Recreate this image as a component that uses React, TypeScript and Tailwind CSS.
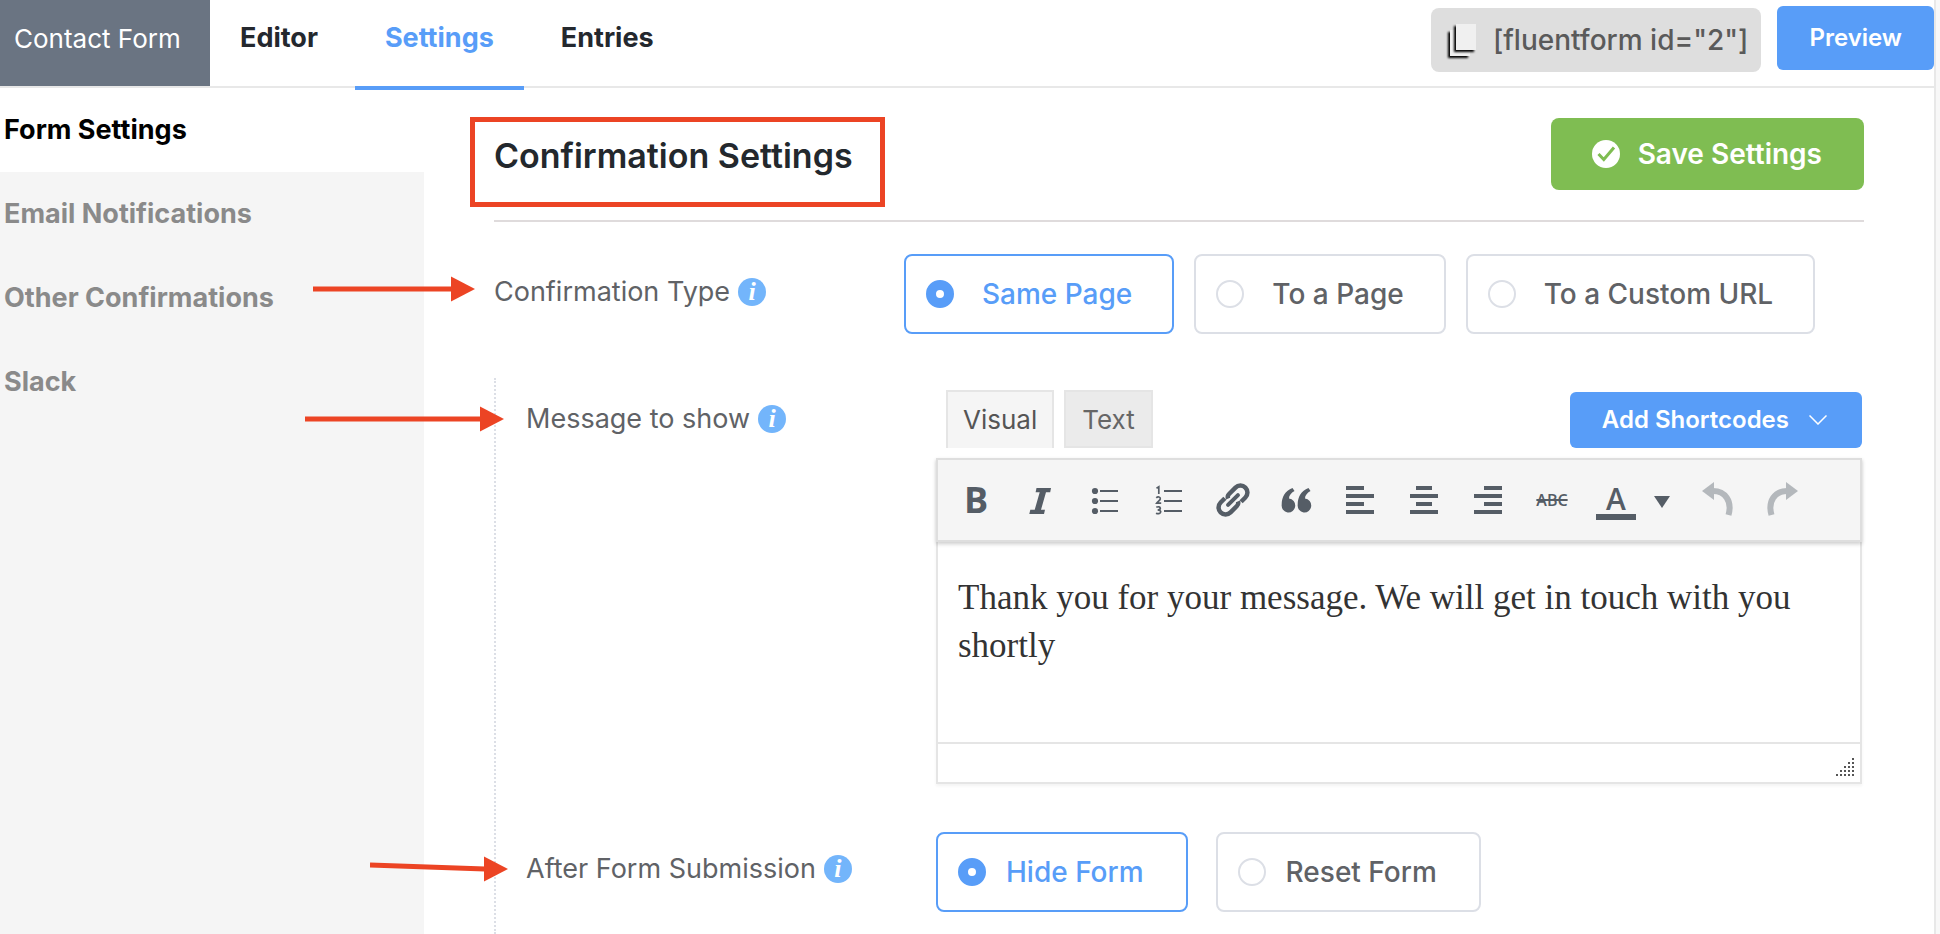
import { useState, type ReactNode } from "react";

const sans = "font-['Inter',sans-serif]";

function InfoIcon() {
  return (
    <span
      aria-hidden
      className="flex size-7 shrink-0 items-center justify-center rounded-full bg-[#73b5fb] font-['Liberation_Serif',serif] text-[26px] leading-7 font-bold text-white italic"
    >
      i
    </span>
  );
}

function FieldLabel({ children }: { children: ReactNode }) {
  return (
    <div className="flex items-center gap-2 text-[27px] leading-9 whitespace-nowrap text-[#606266]">
      {children}
      <InfoIcon />
    </div>
  );
}

function Arrow({ className, length, tilt = 0 }: { className: string; length: number; tilt?: number }) {
  const y = 13 + tilt;
  return (
    <svg
      aria-hidden
      width={length}
      height={32}
      viewBox={`0 0 ${length} 32`}
      className={`pointer-events-none absolute z-10 ${className}`}
    >
      <path d={`M0 13L${length - 23} ${y}`} stroke="#ec4424" strokeWidth="5" />
      <path d={`M${length - 24} ${y - 12.5}L${length} ${y}L${length - 24} ${y + 12.5}Z`} fill="#ec4424" />
    </svg>
  );
}

type OptionsProps = {
  name: string;
  options: string[];
  value: string;
  onChange: (v: string) => void;
  groupClass: string;
  itemClass: string;
};

function RadioCards({ name, options, value, onChange, groupClass, itemClass }: OptionsProps) {
  return (
    <div role="radiogroup" aria-label={name} className={`flex ${groupClass}`}>
      {options.map((option) => (
        <label
          key={option}
          className={`flex h-20 cursor-pointer items-center rounded-lg border-2 border-[#dcdfe6] pl-5 text-[28px] font-medium whitespace-nowrap text-[#606266] has-checked:border-[#589df8] has-checked:text-[#589df8] ${itemClass}`}
        >
          <input
            type="radio"
            name={name}
            checked={value === option}
            onChange={() => onChange(option)}
            className="size-7 shrink-0 appearance-none rounded-full border-2 border-[#dcdfe6] bg-white checked:border-[10px] checked:border-[#589df8]"
          />
          {option}
        </label>
      ))}
    </div>
  );
}

function Tool({ label, children, faded }: { label: string; children: ReactNode; faded?: boolean }) {
  return (
    <button
      type="button"
      aria-label={label}
      className={`flex h-10 w-16 shrink-0 items-center justify-center ${faded ? "text-[#b4b8bc]" : "text-[#555d66]"}`}
    >
      {children}
    </button>
  );
}

function Glyph({ children }: { children: ReactNode }) {
  return (
    <svg width="40" height="40" viewBox="0 0 40 40" fill="currentColor" aria-hidden>
      {children}
    </svg>
  );
}

function Toolbar() {
  return (
    <div className="relative flex h-[84px] items-center border-2 border-[#dedede] bg-[#f5f5f5] pl-[6px] shadow-[0_2px_4px_rgba(0,0,0,0.2)]">
      <Tool label="Bold">
        <span className="font-['Open_Sans',sans-serif] text-4xl leading-10 font-bold">B</span>
      </Tool>
      <Tool label="Italic">
        <Glyph>
          <path d="M16.500 8H31L30.200 12.200H26L21 29.800H25L24 34H9.300L10.300 29.800H14.700L19.700 12.200H15.600Z" />
        </Glyph>
      </Tool>
      <Tool label="Bulleted list">
        <Glyph>
          <circle cx="11" cy="11" r="3.100" />
          <circle cx="11" cy="21" r="3.100" />
          <circle cx="11" cy="31" r="3.100" />
          <path d="M16 10h18v2H16zM16 20h18v2H16zM16 30h18v2H16z" />
        </Glyph>
      </Tool>
      <Tool label="Numbered list">
        <Glyph>
          <g fill="none" stroke="currentColor" strokeWidth="1.700">
            <path d="M8.500 8.200L10.800 6.800V14" />
            <path d="M8.300 17.800C9.800 16.300 12.600 16.800 12.300 18.800C12.100 20.300 10 21.500 8.800 23.100H13.200" />
            <path d="M8.300 27.300C10 26.300 12.400 26.700 12.300 28.400C12.200 29.700 11 30 9.600 30C11.400 30 12.800 30.500 12.700 32C12.500 34 9.800 34 8 33.200" />
          </g>
          <path d="M16 10h18v2H16zM16 20h18v2H16zM16 30h18v2H16z" />
        </Glyph>
      </Tool>
      <Tool label="Insert link">
        <Glyph>
          <g transform="translate(1 0) rotate(-45 20 20)" fill="none" stroke="currentColor" strokeWidth="4.500">
            <path d="M17.500 15.500C18.300 13.700 19.700 13 21.500 13H30.500a7 7 0 0 1 0 14H24.500" />
            <path d="M22.500 24.500C21.700 26.300 20.300 27 18.500 27H9.500a7 7 0 0 1 0-14H15.500" />
            <path d="M13 20H27" stroke="#f5f5f5" strokeWidth="7" strokeLinecap="round" />
            <path d="M13 20H27" strokeWidth="4" strokeLinecap="round" />
          </g>
        </Glyph>
      </Tool>
      <Tool label="Blockquote">
        <Glyph>
          <path d="M16.500 8C9 11 5.700 17 5.700 24.500A6.800 7 0 1 0 13 18.500C13 15.500 15 13 18.500 11Z" />
          <path d="M32.500 8C25 11 21.700 17 21.700 24.500A6.800 7 0 1 0 29 18.500C29 15.500 31 13 34.500 11Z" />
        </Glyph>
      </Tool>
      <Tool label="Align left">
        <Glyph>
          <path d="M6 6h18v4H6zM6 14h28v4H6zM6 22h18v4H6zM6 30h28v4H6z" />
        </Glyph>
      </Tool>
      <Tool label="Align center">
        <Glyph>
          <path d="M12 6h16v4H12zM6 14h28v4H6zM12 22h16v4H12zM6 30h28v4H6z" />
        </Glyph>
      </Tool>
      <Tool label="Align right">
        <Glyph>
          <path d="M16 6h18v4H16zM6 14h28v4H6zM16 22h18v4H16zM6 30h28v4H6z" />
        </Glyph>
      </Tool>
      <Tool label="Strikethrough">
        <span className="font-['Open_Sans',sans-serif] text-base leading-10 font-semibold line-through decoration-2">
          ABC
        </span>
      </Tool>
      <Tool label="Text color">
        <span className="flex h-10 w-10 flex-col items-center border-b-6 border-current font-['Open_Sans',sans-serif] text-3xl leading-[38px] font-semibold">
          A
        </span>
      </Tool>
      <button type="button" aria-label="More text colors" className="w-[38px] shrink-0 pt-1 pl-[6px] text-[#555d66]">
        <svg width="16" height="12" viewBox="0 0 16 12" fill="currentColor" aria-hidden>
          <path d="M0 0H16L8 12Z" />
        </svg>
      </button>
      <Tool label="Undo" faded>
        <Glyph>
          <path d="M4 11L16 2V20Z" />
          <path d="M15 11C27 11 34.500 21 30.500 35" fill="none" stroke="currentColor" strokeWidth="6" />
        </Glyph>
      </Tool>
      <Tool label="Redo" faded>
        <Glyph>
          <path d="M36 11L24 2V20Z" />
          <path d="M25 11C13 11 5.500 21 9.500 35" fill="none" stroke="currentColor" strokeWidth="6" />
        </Glyph>
      </Tool>
    </div>
  );
}

function ResizeGrip() {
  const dots = [0, 1, 2, 3, 4].flatMap((row) =>
    [0, 1, 2, 3, 4].filter((col) => col >= 4 - row).map((col) => ({ row, col })),
  );
  return (
    <svg width="18" height="18" viewBox="0 0 18 18" fill="#555" aria-hidden>
      {dots.map(({ row, col }) => (
        <rect key={`${row}-${col}`} x={col * 4} y={row * 4} width="2" height="2" />
      ))}
    </svg>
  );
}

function Header() {
  return (
    <header className="relative z-10 flex h-[88px] border-b-2 border-[#e8e8e8]">
      <div className="flex w-[210px] items-center bg-[#6a7482] pb-[10px] pl-[14px] text-[26px] whitespace-nowrap text-white">
        Contact Form
      </div>
      <nav className="flex gap-[7px] text-[27px] font-bold text-[#24282e]">
        <a href="#editor" className="flex items-center px-[30px] pb-[10px]">
          Editor
        </a>
        <a
          href="#settings"
          aria-current="page"
          className="-mb-1 flex items-center border-b-4 border-[#589df8] px-[30px] pb-[10px] text-[#589df8]"
        >
          Settings
        </a>
        <a href="#entries" className="flex items-center px-[30px] pb-[10px]">
          Entries
        </a>
      </nav>
      <div className="ml-auto flex items-start gap-4">
        <button
          type="button"
          className="mt-2 flex h-16 items-center gap-[17px] rounded-lg bg-[#dedede] pr-[13px] pl-[14px] text-[28px] font-medium whitespace-nowrap text-[#5a5a5a]"
        >
          <svg width="31" height="40" viewBox="0 0 31 40" aria-hidden>
            <defs>
              <filter id="sheet" x="-30%" y="-30%" width="160%" height="160%">
                <feDropShadow dx="-2" dy="2" stdDeviation="1" floodColor="#000" floodOpacity="1" />
              </filter>
            </defs>
            <rect x="5" y="10" width="20" height="26" fill="#f0f0f0" filter="url(#sheet)" />
            <rect x="11" y="4" width="20" height="26" fill="#f0f0f0" filter="url(#sheet)" />
          </svg>
          [fluentform id="2"]
        </button>
        <button
          type="button"
          className="mt-[6px] h-16 rounded-md bg-[#589df8] px-8 text-2xl font-semibold text-white"
        >
          Preview
        </button>
      </div>
    </header>
  );
}

const menu = ["Form Settings", "Email Notifications", "Other Confirmations", "Slack"];

export default function App() {
  const [type, setType] = useState("Same Page");
  const [after, setAfter] = useState("Hide Form");
  const [message, setMessage] = useState("Thank you for your message. We will get in touch with you shortly");

  return (
    <div className={`flex min-h-screen bg-[#f8f8f8] pr-1 ${sans}`}>
      <div className="flex min-w-0 flex-1 flex-col border-r-2 border-[#e8e8e8] bg-white">
        <Header />

        <div className="flex flex-1">
          <aside className="w-[424px] shrink-0 bg-[#f5f5f5]">
            {menu.map((item, i) => (
              <a
                key={item}
                href={`#${item.toLowerCase().replace(" ", "-")}`}
                className={`flex h-[84px] items-center pl-1 text-[27px] font-bold ${i === 0 ? "bg-white text-black" : "text-[#8a8a8a]"}`}
              >
                {item}
              </a>
            ))}
          </aside>

          <main className="flex min-w-0 flex-1 flex-col px-[70px]">
            <div className="flex items-center justify-between border-b-2 border-[#dfdbdc] py-[30px]">
              <h1 className="relative pt-1 text-[34px] leading-[68px] font-semibold whitespace-nowrap text-[#23282d]">
                Confirmation Settings
                {/* highlight frame */}
                <span className="absolute -top-px -right-8 -left-6 h-[90px] border-5 border-[#ec4424]" />
              </h1>
              <button
                type="button"
                className="flex h-[72px] items-center gap-[18px] rounded-lg bg-[#7fbd52] pr-[42px] pl-[41px] text-[28px] font-semibold whitespace-nowrap text-white"
              >
                <svg width="28" height="28" viewBox="0 0 28 28" aria-hidden>
                  <circle cx="14" cy="14" r="14" fill="#fff" />
                  <path d="M6.500 14L11.800 19.500L22 7.500" fill="none" stroke="#7fbd52" strokeWidth="3" />
                </svg>
                Save Settings
              </button>
            </div>

            <section className="relative mt-8 flex items-center">
              <Arrow className="top-[22px] -left-[181px]" length={162} />
              <div className="w-[410px] shrink-0 pb-1">
                <FieldLabel>Confirmation Type</FieldLabel>
              </div>
              <RadioCards
                name="Confirmation Type"
                options={["Same Page", "To a Page", "To a Custom URL"]}
                value={type}
                onChange={setType}
                groupClass="gap-5"
                itemClass="gap-7 pr-10"
              />
            </section>

            <div className="mt-11 flex flex-1 flex-col gap-12 border-l-2 border-dotted border-[#dcdfe6] pt-3 pr-[2px] pb-[22px] pl-[30px]">
              <section className="relative flex">
                <Arrow className="top-4 -left-[221px]" length={199} />
                <div className="flex h-[58px] w-[410px] shrink-0 items-center">
                  <FieldLabel>Message to show</FieldLabel>
                </div>
                <div className="min-w-0 flex-1">
                  <div className="flex h-[58px] items-end gap-[10px] pl-[10px] text-[26px]">
                    <button
                      type="button"
                      className="h-[58px] border-2 border-b-0 border-[#e5e5e5] bg-[#f5f5f5] px-[15px] pb-[2px] text-[#555]"
                    >
                      Visual
                    </button>
                    <button
                      type="button"
                      className="h-[58px] border-2 border-[#e5e5e5] bg-[#ebebeb] px-4 text-[#666]"
                    >
                      Text
                    </button>
                    <button
                      type="button"
                      className="ml-auto flex h-14 items-center gap-5 rounded-md bg-[#589df8] pr-[35px] pl-8 text-2xl font-semibold whitespace-nowrap text-white"
                    >
                      Add Shortcodes
                      <svg width="18" height="10" viewBox="0 0 18 10" fill="none" stroke="currentColor" strokeWidth="1.500" aria-hidden>
                        <path d="M0.500 0.500L9 9L17.500 0.500" />
                      </svg>
                    </button>
                  </div>

                  <div className="mt-[10px] shadow-[0_2px_3px_rgba(0,0,0,0.05)]">
                    <Toolbar />
                    <textarea
                      aria-label="Message to show"
                      value={message}
                      onChange={(e) => setMessage(e.target.value)}
                      className="block h-[200px] w-full resize-none border-x-2 border-[#e5e5e5] bg-white px-5 pt-8 font-['Liberation_Serif',serif] text-[35px] leading-[48px] text-[#333] outline-none"
                    />
                    <div className="flex h-[42px] items-end justify-end border-2 border-[#e5e5e5] bg-white p-[6px]">
                      <ResizeGrip />
                    </div>
                  </div>
                </div>
              </section>

              <section className="relative flex items-center">
                <Arrow className="top-5 -left-[156px]" length={138} tilt={4} />
                <div className="w-[410px] shrink-0 pb-[6px]">
                  <FieldLabel>After Form Submission</FieldLabel>
                </div>
                <RadioCards
                  name="After Form Submission"
                  options={["Hide Form", "Reset Form"]}
                  value={after}
                  onChange={setAfter}
                  groupClass="gap-7"
                  itemClass="gap-5 pr-[42px]"
                />
              </section>
            </div>
          </main>
        </div>
      </div>
    </div>
  );
}
